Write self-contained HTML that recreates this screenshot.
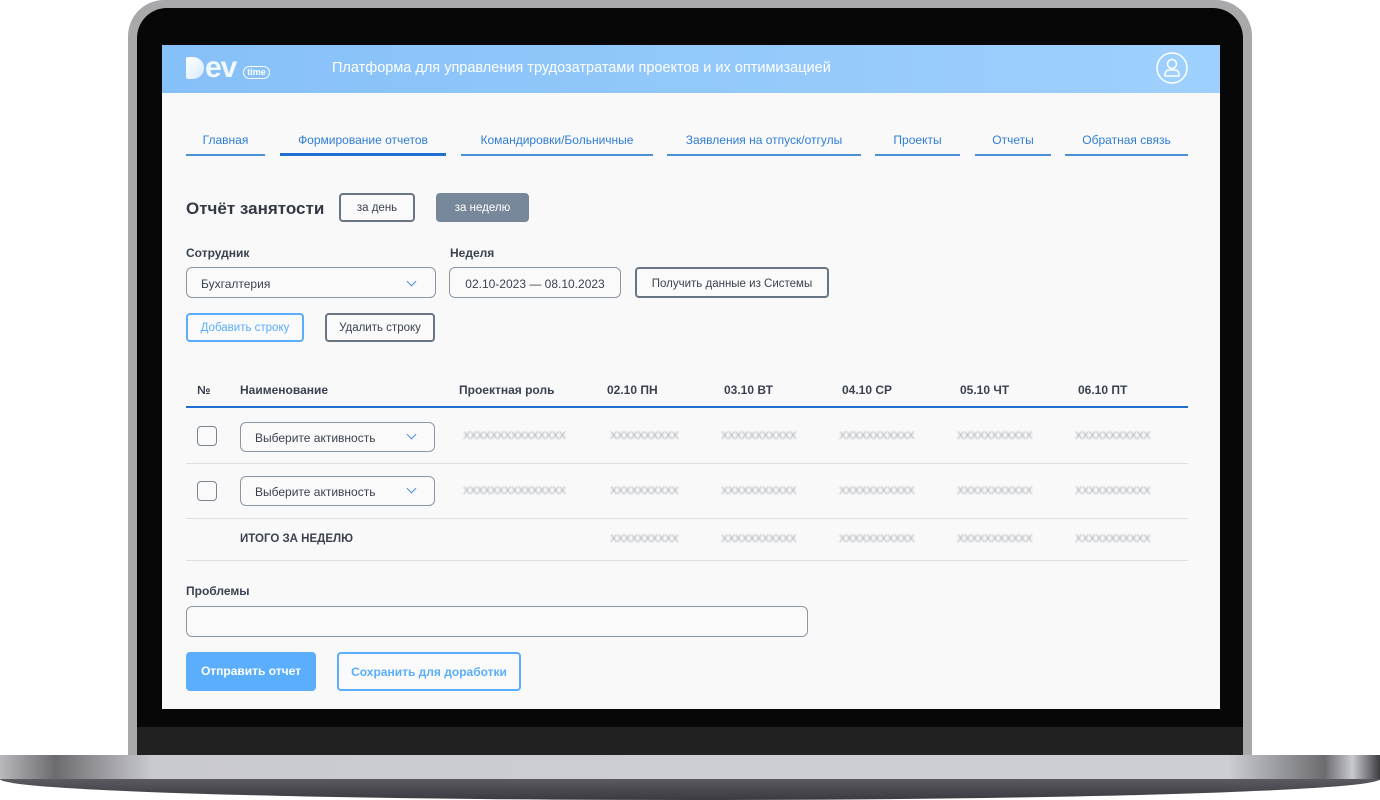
<!DOCTYPE html>
<html><head><meta charset="utf-8"><style>
*{box-sizing:border-box;margin:0;padding:0}
body{width:1380px;height:800px;background:#fff;position:relative;overflow:hidden;font-family:"Liberation Sans",sans-serif;}
.a{position:absolute}
.t{position:absolute;white-space:nowrap;font-size:12px;color:#3a4250}
.b{font-weight:bold}
.tab{position:absolute;top:131px;height:25px;border-bottom:2px solid #4a90d9;color:#2f7dd6;font-size:12px;text-align:center;line-height:18px}
.box{position:absolute;border:1px solid #8c97a6;border-radius:6px;background:#fafafa;font-size:12px;color:#3a4250}
.btn{position:absolute;border:2px solid #6a7584;border-radius:4px;font-size:11.5px;color:#3a4250;text-align:center;background:#fafafa}
.x{position:absolute;font-size:11px;color:#a8adb5;filter:blur(0.8px);letter-spacing:-0.5px;white-space:nowrap}
.chev{position:absolute;width:7px;height:7px;border-right:1.6px solid #4a90d9;border-bottom:1.6px solid #4a90d9;transform:rotate(45deg)}
.cb{position:absolute;left:197px;width:20px;height:20px;border:1px solid #7a8492;border-radius:4px;background:#fafafa}
.ln{position:absolute;left:186px;width:1002px;height:1px;background:#dcdfe3}
</style></head><body>
<div class="a" style="left:128px;top:0;width:1124px;height:760px;background:#a9a9ab;border-radius:36px 36px 0 0"></div>
<div class="a" style="left:137px;top:8px;width:1106px;height:752px;background:#070707;border-radius:30px 30px 0 0"></div>
<div class="a" style="left:137px;top:727px;width:1106px;height:30px;background:#212121"></div>
<div class="a" style="left:0;top:755px;width:1380px;height:25px;background:linear-gradient(90deg,#b9b9bd 0,#6c6c70 4%,#c9cacf 11%,#ccced4 50%,#ccced4 89%,#6c6c70 96%,#c9cacf 98%,#3c3c40 100%)"></div>
<div class="a" style="left:0;top:779px;width:1380px;height:21px;background:linear-gradient(#5a5a60,#3a3a40);border-radius:0 0 50% 50%/0 0 100% 100%"></div>
<div class="a" style="left:162px;top:45px;width:1058px;height:664px;background:#f9f9f9"></div>
<div class="a" style="left:162px;top:45px;width:1058px;height:48px;background:linear-gradient(90deg,#86c0f8,#9fd0fd)"></div>
<div class="a" style="left:186px;top:57px;width:18px;height:22px;background:linear-gradient(135deg,#fff,#d7ebff);border-radius:2px 11px 11px 2px"></div>
<div class="t b" style="left:205px;top:52px;font-size:30px;color:#f2f8ff;letter-spacing:-1px;line-height:32px">ev</div>
<div class="a" style="left:243px;top:66px;width:27px;height:13px;border:1.5px solid #fff;border-radius:7px;color:#fff;font-size:9px;text-align:center;line-height:10px;font-weight:bold">time</div>
<div class="t" style="left:332px;top:60px;font-size:14.5px;color:#fff">Платформа для управления трудозатратами проектов и их оптимизацией</div>
<svg class="a" style="left:1156px;top:52px" width="32" height="32" viewBox="0 0 32 32" fill="none" stroke="#fff" stroke-width="1.5"><circle cx="16" cy="16" r="15"/><circle cx="16" cy="12" r="4.5"/><path d="M9 24v-2a4 4 0 0 1 4-4h6a4 4 0 0 1 4 4v2z"/></svg>
<div class="tab" style="left:186px;width:79px">Главная</div>
<div class="tab" style="left:280px;width:166px;border-bottom:3px solid #1f6fd0">Формирование отчетов</div>
<div class="tab" style="left:461px;width:192px">Командировки/Больничные</div>
<div class="tab" style="left:667px;width:194px">Заявления на отпуск/отгулы</div>
<div class="tab" style="left:875px;width:85px">Проекты</div>
<div class="tab" style="left:975px;width:76px">Отчеты</div>
<div class="tab" style="left:1065px;width:123px">Обратная связь</div>
<div class="t b" style="left:186px;top:199px;font-size:17px;color:#333a45">Отчёт занятости</div>
<div class="btn" style="left:339px;top:193px;width:76px;height:29px;line-height:27px">за день</div>
<div class="a" style="left:436px;top:193px;width:93px;height:29px;background:#77889b;border-radius:4px;color:#fff;font-size:11.5px;text-align:center;line-height:30px">за неделю</div>
<div class="t b" style="left:186px;top:246px">Сотрудник</div>
<div class="t b" style="left:450px;top:246px">Неделя</div>
<div class="box" style="left:186px;top:267px;width:250px;height:31px;padding:9px 14px">Бухгалтерия</div>
<div class="chev" style="left:408px;top:278px"></div>
<div class="box" style="left:449px;top:267px;width:172px;height:31px;padding:9px 0;text-align:center">02.10-2023 — 08.10.2023</div>
<div class="btn" style="left:635px;top:267px;width:194px;height:31px;line-height:30px">Получить данные из Системы</div>
<div class="btn" style="left:186px;top:313px;width:118px;height:29px;line-height:27px;border-color:#5aaefc;color:#5aaefc">Добавить строку</div>
<div class="btn" style="left:325px;top:313px;width:110px;height:29px;line-height:27px">Удалить строку</div>
<div class="t b" style="left:197px;top:383px">№</div>
<div class="t b" style="left:240px;top:383px">Наименование</div>
<div class="t b" style="left:459px;top:383px">Проектная роль</div>
<div class="t b" style="left:607px;top:383px">02.10 ПН</div>
<div class="t b" style="left:724px;top:383px">03.10 ВТ</div>
<div class="t b" style="left:842px;top:383px">04.10 СР</div>
<div class="t b" style="left:960px;top:383px">05.10 ЧТ</div>
<div class="t b" style="left:1078px;top:383px">06.10 ПТ</div>
<div class="a" style="left:186px;top:406px;width:1002px;height:2px;background:#1f6fd0"></div>
<div class="cb" style="top:426px"></div>
<div class="box" style="left:240px;top:422px;width:195px;height:30px;padding:8px 14px">Выберите активность</div>
<div class="chev" style="left:408px;top:431px"></div>
<div class="ln" style="top:463px"></div>
<div class="cb" style="top:481px"></div>
<div class="box" style="left:240px;top:476px;width:195px;height:30px;padding:8px 14px">Выберите активность</div>
<div class="chev" style="left:408px;top:485px"></div>
<div class="ln" style="top:518px"></div>
<div class="t b" style="left:240px;top:533px;font-size:11.5px">ИТОГО ЗА НЕДЕЛЮ</div>
<div class="ln" style="top:560px"></div>
<div class="x" style="left:463px;top:430px">XXXXXXXXXXXXXXX</div>
<div class="x" style="left:463px;top:485px">XXXXXXXXXXXXXXX</div>
<div class="x" style="left:610px;top:430px">XXXXXXXXXX</div><div class="x" style="left:721px;top:430px">XXXXXXXXXXX</div><div class="x" style="left:839px;top:430px">XXXXXXXXXXX</div><div class="x" style="left:957px;top:430px">XXXXXXXXXXX</div><div class="x" style="left:1075px;top:430px">XXXXXXXXXXX</div>
<div class="x" style="left:610px;top:485px">XXXXXXXXXX</div><div class="x" style="left:721px;top:485px">XXXXXXXXXXX</div><div class="x" style="left:839px;top:485px">XXXXXXXXXXX</div><div class="x" style="left:957px;top:485px">XXXXXXXXXXX</div><div class="x" style="left:1075px;top:485px">XXXXXXXXXXX</div>
<div class="x" style="left:610px;top:533px">XXXXXXXXXX</div><div class="x" style="left:721px;top:533px">XXXXXXXXXXX</div><div class="x" style="left:839px;top:533px">XXXXXXXXXXX</div><div class="x" style="left:957px;top:533px">XXXXXXXXXXX</div><div class="x" style="left:1075px;top:533px">XXXXXXXXXXX</div>
<div class="t b" style="left:186px;top:584px">Проблемы</div>
<div class="box" style="left:186px;top:606px;width:622px;height:31px"></div>
<div class="a" style="left:186px;top:652px;width:130px;height:39px;background:#5aaefc;border-radius:4px;color:#fff;font-size:12px;font-weight:bold;text-align:center;line-height:39px">Отправить отчет</div>
<div class="btn" style="left:337px;top:652px;width:184px;height:39px;line-height:36px;border-color:#5aaefc;color:#5aaefc;font-weight:bold;font-size:12px">Сохранить для доработки</div>
</body></html>
